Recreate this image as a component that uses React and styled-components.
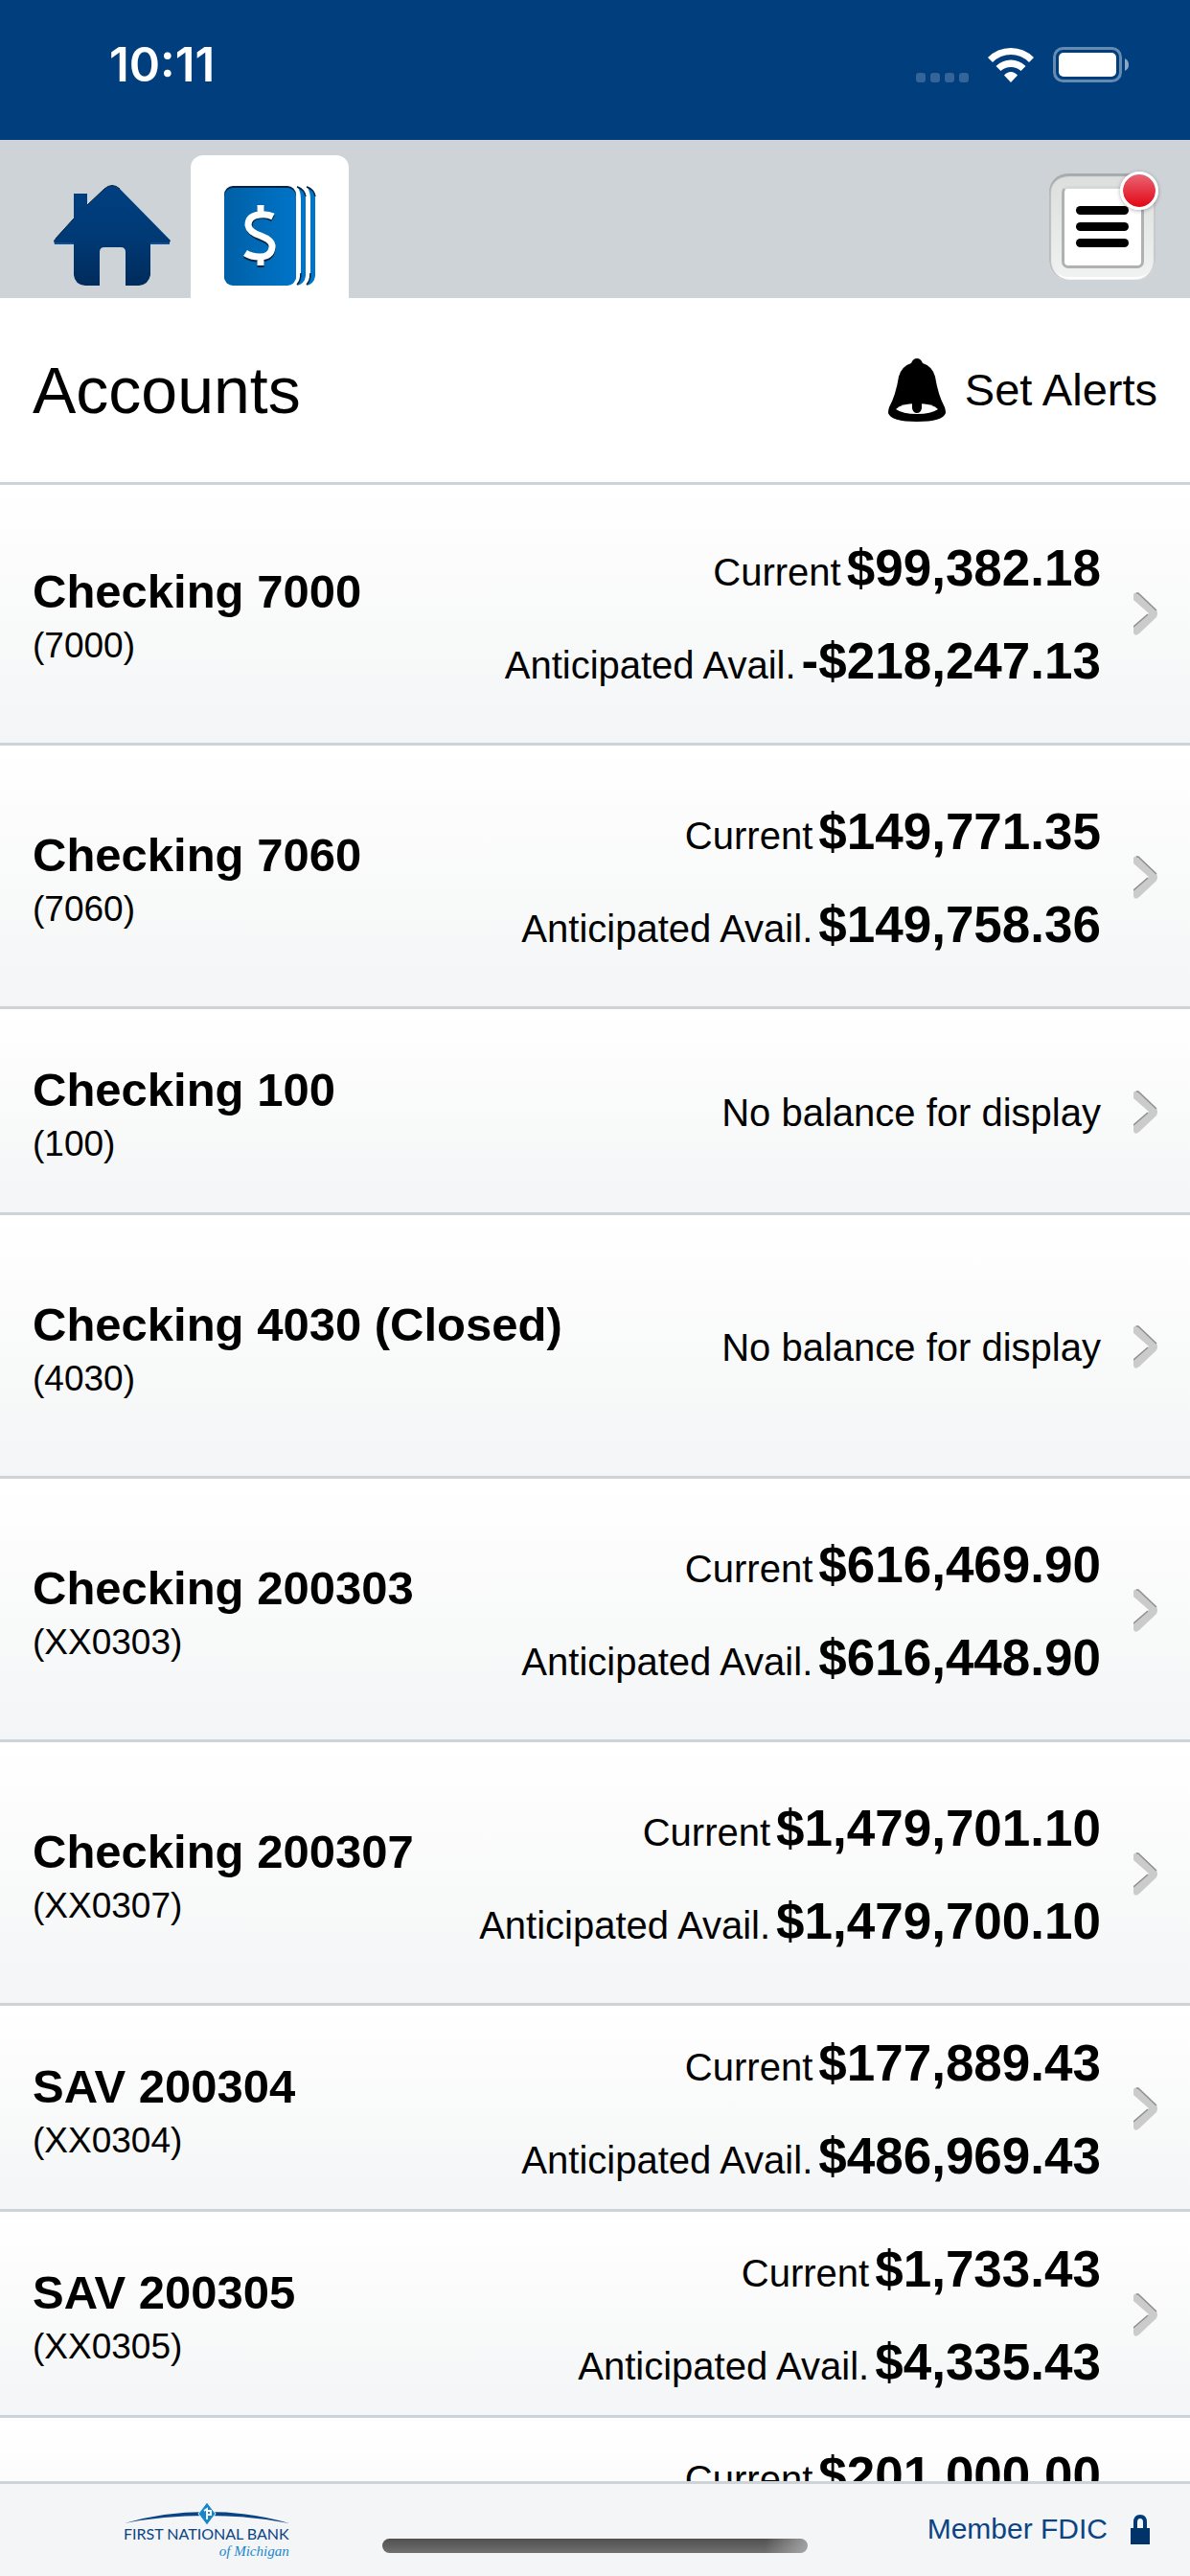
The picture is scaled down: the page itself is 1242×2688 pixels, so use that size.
import React from "react";
import styled, { createGlobalStyle } from "styled-components";

const accounts = [
    { name: "Checking 7000", number: "7000", current: "$99,382.18", available: "-$218,247.13", tall: true },
    { name: "Checking 7060", number: "7060", current: "$149,771.35", available: "$149,758.36", tall: true },
    { name: "Checking 100", number: "100" },
    { name: "Checking 4030 (Closed)", number: "4030", tall: true },
    { name: "Checking 200303", number: "XX0303", current: "$616,469.90", available: "$616,448.90", tall: true },
    { name: "Checking 200307", number: "XX0307", current: "$1,479,701.10", available: "$1,479,700.10", tall: true },
    { name: "SAV 200304", number: "XX0304", current: "$177,889.43", available: "$486,969.43" },
    { name: "SAV 200305", number: "XX0305", current: "$1,733.43", available: "$4,335.43" },
    { name: "SAV 200306", number: "XX0306", current: "$201,000.00", available: "$201,000.00" }
];

const HomeIcon = () => (
    <svg width="122" height="105" viewBox="0 0 122 105" aria-hidden="true">
        <defs>
            <linearGradient id="house" x1="0" y1="0" x2="0" y2="1">
                <stop offset="0" stopColor="#003f80" />
                <stop offset="0.5" stopColor="#003a76" />
                <stop offset="1" stopColor="#002b5c" />
            </linearGradient>
        </defs>
        <path
            fill="url(#house)"
            d="M0 58 L21 35 V9 H35 V21 L53 4 Q61 -3 69 4 L122 58 L120 62 H101 V94 Q99 104 89 105 H75 V70 Q75 65 70 65 H53 Q48 65 48 70 V105 H33 Q22 104 21 94 V62 H1 Z"
        />
        <path d="M35 21 L53 4 Q61 -3 69 4 M2 56 L21 35" fill="none" stroke="#07213f" strokeWidth="1" />
        <path d="M1 61 H21 M101 61 H121" stroke="#0b4f96" strokeWidth="2" />
    </svg>
);

const LedgerIcon = () => (
    <svg width="96" height="104" viewBox="0 0 96 104" aria-hidden="true">
        <defs>
            <linearGradient id="ledger" x1="0" y1="0" x2="1" y2="0">
                <stop offset="0" stopColor="#0060a6" />
                <stop offset="1" stopColor="#0074c8" />
            </linearGradient>
        </defs>
        <rect x="0" y="0" width="75" height="103" rx="9" fill="#06233f" />
        <rect x="0" y="2" width="75" height="102" rx="9" fill="url(#ledger)" />
        <path d="M76 0 Q85 3 85 12 V94 Q84 102 76 104 Q80 98 80 90 V14 Q80 6 76 0 Z" fill="#0074c8" />
        <path d="M86 0 Q95 3 95 12 V94 Q94 102 86 104 Q90 98 90 90 V14 Q90 6 86 0 Z" fill="#0074c8" />
        <path d="M76 1 Q84 4 85 11 M86 1 Q94 4 95 11 M76 103 Q80 99 80 91 M86 103 Q90 99 90 91" fill="none" stroke="#06233f" strokeWidth="1.5" />
        <g fill="none" strokeWidth="7">
            <path d="M51 34 Q45 30 37 31 Q26 32 26 42 Q26 49 38 54 Q51 59 50 66 Q49 76 37 76 Q28 76 22 72 M38 22 V33 M38 74 V85" stroke="#06233f" />
            <path d="M51 32 Q45 29 37 30 Q25 31 25 41 Q26 48 38 52 Q51 57 50 64 Q49 74 37 74 Q28 74 22 70 M38 20 V31 M38 72 V83" stroke="#ffffff" />
        </g>
    </svg>
);

const BellIcon = () => (
    <svg width="60" height="66" viewBox="0 0 60 66" aria-hidden="true">
        <path d="M30 0 Q34 0 36 5 Q46 8 49 19 Q52 38 59 51 Q60 54 60 57 Q57 66 30 66 Q3 66 0 57 Q0 54 1 51 Q8 38 11 19 Q14 8 24 5 Q26 0 30 0 Z" />
        <path d="M8 53 Q13 47 30 47 Q47 47 52 53 Q45 58 30 58 Q15 58 8 53 Z" fill="#ffffff" />
        <path d="M25 47 H35 V52 Q34 57 30 57 Q26 57 25 52 Z" />
    </svg>
);

const ChevronIcon = () => (
    <svg width="25" height="45" viewBox="0 0 25 45" aria-hidden="true">
        <path d="M0 2 Q2 -1 5 1 L24 19 Q26 22 24 26 L6 43 Q1 47 0 42 V36 L16 22 L0 8 Z" fill="#cbcbcb" />
        <path d="M3 1 H5 L24 19 M0 36 L15 23" fill="none" stroke="#8e8e8e" strokeWidth="1.5" />
    </svg>
);

const LockIcon = () => (
    <svg width="20" height="31" viewBox="0 0 20 31" aria-hidden="true">
        <path d="M5 16 V8 Q5 2 10 2 Q15 2 15 8 V16" fill="none" stroke="#003a76" strokeWidth="4" />
        <rect y="14" width="20" height="17" fill="#003468" />
    </svg>
);

const WifiIcon = () => (
    <svg width="48" height="36" viewBox="0 0 48 36" fill="#ffffff" aria-hidden="true">
        <path d="M24 0 Q38 0 48 10 L43 15 Q35 7 24 7 Q13 7 5 15 L0 10 Q10 0 24 0 Z" />
        <path d="M24 12.500 Q33 12.500 39.500 19 L34.500 24 Q30 20 24 20 Q18 20 13.500 24 L8.500 19 Q15 12.500 24 12.500 Z" />
        <path d="M24 25 Q28 25 31 28.500 L24 36 L17 28.500 Q20 25 24 25 Z" />
    </svg>
);

const BatteryIcon = () => (
    <svg width="79" height="37" viewBox="0 0 79 37" aria-hidden="true">
        <rect x="1.500" y="1.500" width="69" height="34" rx="9" fill="none" stroke="#668bb1" strokeWidth="3" />
        <rect x="6" y="6" width="60" height="25" rx="5" fill="#ffffff" />
        <path d="M75 12 Q79 14 79 18.500 Q79 23 75 25 Z" fill="#8ca8c4" />
    </svg>
);

const LogoMark = () => (
    <svg width="172" height="24" viewBox="0 0 172 24" aria-hidden="true">
        <path d="M0 22 Q40 10 86 10 Q132 10 172 22 Q132 14 86 14 Q40 14 0 22 Z" fill="#0a4484" />
        <path d="M86 0 L95 12 L86 24 L77 12 Z" fill="#1787cc" stroke="#f4f5f7" strokeWidth="1" />
        <path d="M83 9 L86 7 V18 M87 9 H90 V13 H87" fill="none" stroke="#ffffff" strokeWidth="2" />
    </svg>
);

const App = () => {
    return (
        <Screen>
            <GlobalStyle />
            <StatusBar>
                <Clock>10:11</Clock>
                <StatusIcons>
                    <Signal>
                        <i /><i /><i /><i />
                    </Signal>
                    <WifiIcon />
                    <BatteryIcon />
                </StatusIcons>
            </StatusBar>

            <TabBar>
                <Tabs>
                    <Tab aria-label="Home"><HomeIcon /></Tab>
                    <Tab aria-label="Accounts" $active><LedgerIcon /></Tab>
                </Tabs>
                <MenuButton aria-label="Menu">
                    <MenuFace>
                        <span /><span /><span />
                    </MenuFace>
                    <Badge />
                </MenuButton>
            </TabBar>

            <Header>
                <h1>Accounts</h1>
                <AlertsButton>
                    <BellIcon />
                    <span>Set Alerts</span>
                </AlertsButton>
            </Header>

            <AccountList>
                {accounts.map(account => (
                    <li key={account.number}>
                        <AccountRow href="#" $tall={account.tall}>
                            <AccountInfo>
                                <AccountName>{account.name}</AccountName>
                                <AccountNumber>({account.number})</AccountNumber>
                            </AccountInfo>
                            {account.current ? (
                                <Balances>
                                    <Balance><span>Current</span><strong>{account.current}</strong></Balance>
                                    <Balance><span>Anticipated Avail.</span><strong>{account.available}</strong></Balance>
                                </Balances>
                            ) : (
                                <NoBalance>No balance for display</NoBalance>
                            )}
                            <ChevronIcon />
                        </AccountRow>
                    </li>
                ))}
            </AccountList>

            <Footer>
                <BankLogo>
                    <LogoMark />
                    <BankName>FIRST NATIONAL BANK</BankName>
                    <BankState>of Michigan</BankState>
                </BankLogo>
                <Member>
                    <span>Member FDIC</span>
                    <LockIcon />
                </Member>
                <HomeIndicator />
            </Footer>
        </Screen>
    );
}

export default App;

const GlobalStyle = createGlobalStyle`
    *{
        box-sizing: border-box;
    }

    body{
        margin: 0;
        background: #ffffff;
        color: #000000;
        font-family: "Liberation Sans", Arial, sans-serif;
    }

    button{
        border: none;
        padding: 0;
        background: none;
        font: inherit;
        color: inherit;
        cursor: pointer;
    }

    svg{
        display: block;
        flex-shrink: 0;
    }
`;

const Screen = styled.div`
    height: 100vh;
    display: flex;
    flex-direction: column;
    overflow: hidden;
`;

const StatusBar = styled.div`
    flex-shrink: 0;
    display: flex;
    justify-content: space-between;
    align-items: flex-start;
    padding: 39px 64px 50px 114px;
    background: #003e7d;
    color: #ffffff;
`;

const Clock = styled.div`
    font-family: Inter, sans-serif;
    font-size: 49px;
    line-height: 57px;
    font-weight: 600;
`;

const StatusIcons = styled.div`
    display: flex;
    align-items: flex-end;
    gap: 20px;
    padding-top: 10px;
`;

const Signal = styled.div`
    display: flex;
    gap: 5px;

    i{
        width: 10px;
        height: 10px;
        border-radius: 3px;
        background: #336598;
    }
`;

const TabBar = styled.nav`
    flex-shrink: 0;
    display: flex;
    justify-content: space-between;
    align-items: flex-end;
    padding: 16px 36px 0 34px;
    background: #ced3d7;
`;

const Tabs = styled.div`
    display: flex;
`;

const Tab = styled.button`
    width: 165px;
    height: 149px;
    display: flex;
    align-items: center;
    justify-content: center;
    padding-top: 18px;
    border-radius: 13px 13px 0 0;
    background: ${props => props.$active ? "#ffffff" : "transparent"};
`;

const MenuButton = styled.button`
    position: relative;
    width: 111px;
    height: 111px;
    margin-bottom: 19px;
    display: flex;
    align-items: center;
    justify-content: center;
    border-radius: 20px;
    background: linear-gradient(#dcdddd, #f1f2f2);
    box-shadow: inset 0 3px 1px #a8a9aa, inset 2px 0 1px #bcbebf, inset -2px 0 1px #c8cacb, inset 0 -3px 1px #ffffff;
`;

const MenuFace = styled.span`
    width: 86px;
    height: 86px;
    display: flex;
    flex-direction: column;
    align-items: center;
    justify-content: center;
    gap: 8px;
    border: 3px solid #b0b1b2;
    border-top-color: #d6d7d7;
    border-radius: 7px;
    background: #ffffff;

    span{
        width: 55px;
        height: 9px;
        border-radius: 5px;
        background: #000000;
    }
`;

const Badge = styled.span`
    position: absolute;
    top: -2px;
    right: -3px;
    width: 40px;
    height: 40px;
    border: 3px solid #ffffff;
    border-radius: 50%;
    background: linear-gradient(#e96474, #e30613);
    background-clip: padding-box;
    box-shadow: 0 1px 4px rgba(0, 0, 0, 0.3);
`;

const Header = styled.header`
    flex-shrink: 0;
    display: flex;
    align-items: center;
    justify-content: space-between;
    height: 195px;
    padding: 0 34px;
    border-bottom: 3px solid #ced3d7;

    h1{
        margin: 0;
        font-size: 68px;
        line-height: 80px;
        font-weight: normal;
    }
`;

const AlertsButton = styled.button`
    display: flex;
    align-items: center;
    gap: 20px;
    font-size: 47px;
    line-height: 56px;
`;

const AccountList = styled.ul`
    flex: 1;
    min-height: 0;
    margin: 0;
    padding: 0;
    list-style: none;
    overflow: hidden;
`;

const AccountRow = styled.a`
    display: flex;
    align-items: center;
    min-height: ${props => props.$tall ? "275px" : "215px"};
    padding: 0 34px;
    border-top: 3px solid #ffffff;
    border-bottom: 3px solid #ced3d7;
    background: linear-gradient(#ffffff, #f4f5f6);
    color: inherit;
    text-decoration: none;

    li:first-child &{
        min-height: 272px;
        border-top: none;
    }
`;

const AccountInfo = styled.div`
    flex: 1;
    padding-top: 6px;
`;

const AccountName = styled.div`
    font-size: 49px;
    line-height: 60px;
    font-weight: bold;
`;

const AccountNumber = styled.div`
    font-size: 37px;
    line-height: 54px;
`;

const Balances = styled.div`
    padding-top: 10px;
    margin-right: 34px;
`;

const Balance = styled.div`
    display: flex;
    align-items: baseline;
    justify-content: flex-end;
    gap: 6px;
    font-size: 40px;
    line-height: 97px;

    strong{
        font-size: 53px;
        line-height: 60px;
    }
`;

const NoBalance = styled.div`
    margin-right: 34px;
    font-size: 40px;
    line-height: 52px;
`;

const Footer = styled.footer`
    position: relative;
    flex-shrink: 0;
    display: flex;
    align-items: flex-start;
    justify-content: space-between;
    height: 99px;
    padding: 19px 42px 0 129px;
    border-top: 3px solid #ced3d7;
    background: #f4f5f7;
`;

const BankLogo = styled.div`
    display: flex;
    flex-direction: column;
    align-items: flex-end;
    white-space: nowrap;
`;

const BankName = styled.div`
    font-family: Lato, sans-serif;
    font-size: 16px;
    line-height: 18px;
    color: #0a4484;
`;

const BankState = styled.div`
    font-family: "Liberation Serif", serif;
    font-size: 15px;
    line-height: 18px;
    font-style: italic;
    color: #1787cc;
`;

const Member = styled.div`
    display: flex;
    align-items: center;
    gap: 24px;
    padding-top: 10px;
    font-size: 30px;
    line-height: 36px;
    color: #0a4484;
`;

const HomeIndicator = styled.div`
    position: absolute;
    bottom: 24px;
    left: 50%;
    width: 444px;
    height: 15px;
    margin-left: -222px;
    border-radius: 8px;
    background: linear-gradient(90deg, transparent 90%, rgba(190, 190, 190, 0.7)), linear-gradient(#505050, #707070);
`;
